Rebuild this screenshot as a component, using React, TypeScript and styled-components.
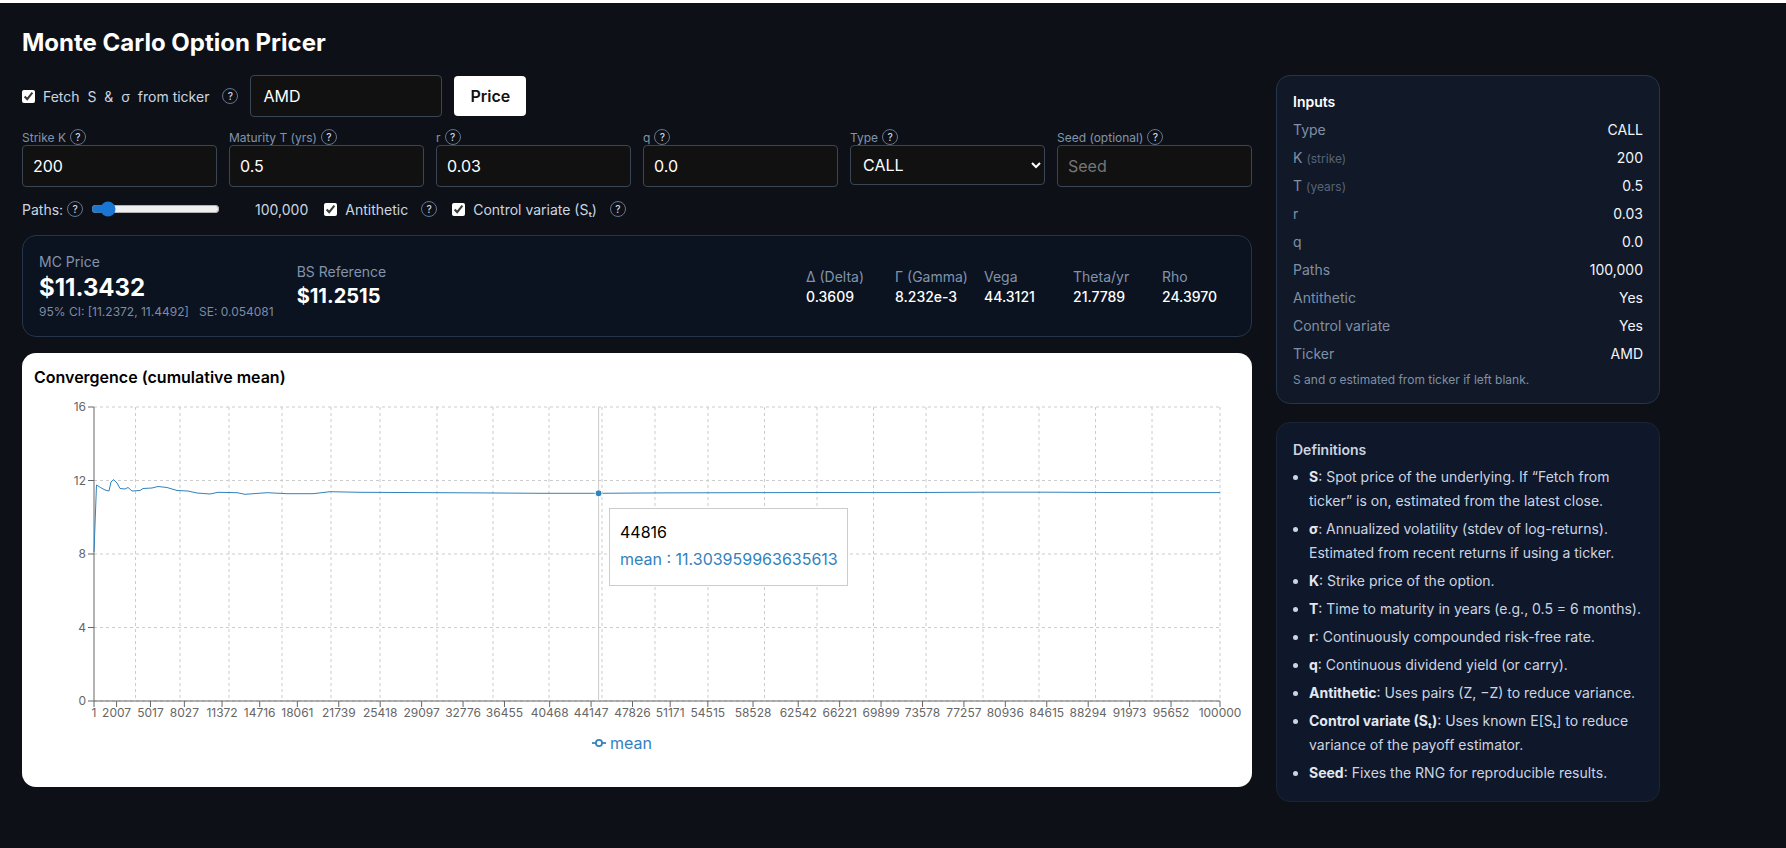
import React from 'react';
import styled, { createGlobalStyle } from 'styled-components';

const GlobalStyle = createGlobalStyle`
  html, body {
    margin: 0;
    padding: 0;
    background: #0d1117;
  }
  body {
    font-family: Inter, "Noto Sans", "DejaVu Sans", sans-serif;
    color: #fff;
  }
  * {
    box-sizing: border-box;
  }
`;

const Page = styled.div`
  min-height: 848px;
  border-top: 3px solid #fff;
  padding: 0 22px;
  background: #0d1117;
`;

const Title = styled.h1`
  margin: 0;
  height: 72px;
  padding-top: 24px;
  font-size: 24px;
  line-height: 32px;
  font-weight: 700;
  color: #fff;
`;

const Layout = styled.div`
  display: grid;
  grid-template-columns: 1230px 384px;
  column-gap: 24px;
  align-items: start;
`;

const Main = styled.main`
  display: flex;
  flex-direction: column;
`;

const Side = styled.aside`
  display: flex;
  flex-direction: column;
  gap: 18px;
`;

const Toolbar = styled.div`
  display: flex;
  align-items: center;
  gap: 12px;
  height: 42px;
`;

const CheckLabel = styled.label`
  display: inline-flex;
  align-items: center;
  gap: 8px;
  font-size: 14px;
  color: #cbd5e1;
  white-space: pre;
`;

const FetchLabel = styled(CheckLabel)`
  margin-right: 1px;
`;

const Check = styled.input.attrs({ type: 'checkbox' })`
  width: 13px;
  height: 13px;
  margin: 0;
  accent-color: #fff;
`;

const Help = styled.span`
  display: inline-flex;
  align-items: center;
  justify-content: center;
  width: 16px;
  height: 16px;
  flex: none;
  border: 1px solid #64748b;
  border-radius: 50%;
  font-size: 10px;
  font-weight: 500;
  color: #cbd5e1;
`;

const TextField = styled.input`
  height: 42px;
  width: 100%;
  padding: 0 10px;
  background: #111;
  border: 1px solid #3b4655;
  border-radius: 4px;
  font-family: inherit;
  font-size: 16px;
  color: #fff;
  outline: none;

  &::placeholder {
    color: #757575;
  }
`;

const TickerField = styled(TextField)`
  width: 192px;
  padding: 0 12px;
`;

const SelectField = styled.select`
  height: 40px;
  width: 100%;
  padding: 0 8px;
  background: #111;
  border: 1px solid #3b4655;
  border-radius: 4px;
  font-family: inherit;
  font-size: 16px;
  color: #fff;
`;

const PriceButton = styled.button`
  width: 72px;
  height: 40px;
  background: #fff;
  border: none;
  border-radius: 4px;
  font-family: inherit;
  font-size: 16px;
  font-weight: 600;
  color: #111;
`;

const Fields = styled.div`
  display: grid;
  grid-template-columns: repeat(6, 195px);
  gap: 12px;
  margin-top: 12px;
`;

const Field = styled.div`
  display: flex;
  flex-direction: column;
`;

const FieldLabel = styled.label`
  display: flex;
  align-items: center;
  gap: 4px;
  height: 16px;
  font-size: 12px;
  color: #8294ab;
`;

const PathsRow = styled.div`
  display: flex;
  align-items: center;
  height: 20px;
  margin-top: 12px;
  font-size: 14px;
  color: #cbd5e1;
`;

const PathsLabel = styled.span`
  display: inline-flex;
  align-items: center;
  gap: 4px;
`;

const Slider = styled.input.attrs({ type: 'range' })`
  width: 129px;
  margin: 0 0 0 8px;
  accent-color: #1976d2;
`;

const PathsValue = styled.span`
  margin-left: 35px;
  margin-right: 16px;
`;

const CheckGroup = styled.span`
  display: inline-flex;
  align-items: center;
  gap: 13px;
  margin-right: 15px;
`;

const Summary = styled.section`
  display: flex;
  align-items: center;
  height: 102px;
  margin-top: 16px;
  padding: 0 12px 0 16px;
  background: #0b1220;
  border: 1px solid #263549;
  border-radius: 14px;
`;

const PriceBlock = styled.div`
  margin-right: 23px;
`;

const SmallLabel = styled.div`
  font-size: 14px;
  line-height: 18px;
  color: #8294ab;
`;

const BigPrice = styled.div`
  font-size: 24px;
  line-height: 34px;
  font-weight: 700;
  color: #fff;
`;

const MidPrice = styled.div`
  margin-top: 1px;
  font-size: 20px;
  line-height: 28px;
  font-weight: 700;
  color: #fff;
`;

const Interval = styled.div`
  margin-top: -1px;
  font-size: 12px;
  line-height: 16px;
  color: #7c8ca3;
  white-space: pre;
`;

const Greeks = styled.div`
  display: grid;
  grid-template-columns: repeat(5, 77px);
  column-gap: 12px;
  margin: 3px 0 0 auto;
`;

const GreekValue = styled.div`
  margin-top: 1px;
  font-size: 14px;
  line-height: 20px;
  font-weight: 500;
  color: #fff;
`;

const ChartCard = styled.section`
  position: relative;
  height: 434px;
  margin-top: 16px;
  padding: 12px 12px 0;
  background: #fff;
  border-radius: 14px;
`;

const ChartTitle = styled.h3`
  margin: 0;
  height: 24px;
  font-size: 16px;
  line-height: 24px;
  font-weight: 600;
  color: #000;
`;

const ChartSvg = styled.svg`
  display: block;
  margin-top: 6px;
  overflow: visible;
`;

const AxisText = styled.text`
  font-family: Inter, sans-serif;
  font-size: 12px;
  fill: #666;
`;

const ChartTooltip = styled.div`
  position: absolute;
  left: 587px;
  top: 155px;
  width: 239px;
  height: 78px;
  padding: 10px;
  background: #fff;
  border: 1px solid #ccc;
  font-size: 16px;
  line-height: 27px;
  color: #000;
  white-space: nowrap;
`;

const TooltipValue = styled.div`
  color: #3182bd;
`;

const Legend = styled.div`
  display: flex;
  align-items: center;
  justify-content: center;
  gap: 4px;
  height: 16px;
  padding-right: 30px;
  font-size: 16px;
  line-height: 16px;
  color: #3182bd;
`;

const Card = styled.section`
  padding: 16px 16px 14px;
  background: #111827;
  border: 1px solid #263549;
  border-radius: 14px;
`;

const DefinitionsCard = styled(Card)`
  padding-bottom: 16px;
  background: #0f172a;
  border-color: #1b2536;
`;

const CardTitle = styled.div`
  margin-bottom: 4px;
  font-size: 14px;
  line-height: 20px;
  font-weight: 600;
  color: #fff;
`;

const DefinitionsTitle = styled(CardTitle)`
  line-height: 22px;
  color: #cbd5e1;
`;

const InputRow = styled.div`
  display: flex;
  justify-content: space-between;
  height: 28px;
  font-size: 14px;
  line-height: 28px;
  color: #7f90a6;
`;

const InputValue = styled.span`
  color: #f1f5f9;
`;

const KeyHint = styled.small`
  margin-left: 4px;
  font-size: 12px;
  color: #556479;
`;

const Note = styled.div`
  margin-top: 3px;
  font-size: 12px;
  line-height: 18px;
  color: #7f90a6;
`;

const DefinitionList = styled.ul`
  margin: 0;
  padding: 0 0 0 16px;
  font-size: 14px;
  line-height: 24px;
  color: #cbd5e1;
`;

const DefinitionItem = styled.li`
  margin-bottom: 4px;

  &:last-child {
    margin-bottom: 0;
  }

  b {
    font-weight: 700;
    color: #e2e8f0;
  }
`;

const inputRows: [string, string | null, string][] = [
  ['Type', null, 'CALL'],
  ['K', '(strike)', '200'],
  ['T', '(years)', '0.5'],
  ['r', null, '0.03'],
  ['q', null, '0.0'],
  ['Paths', null, '100,000'],
  ['Antithetic', null, 'Yes'],
  ['Control variate', null, 'Yes'],
  ['Ticker', null, 'AMD'],
];

const greeks = [
  ['Δ (Delta)', '0.3609'],
  ['Γ (Gamma)', '8.232e-3'],
  ['Vega', '44.3121'],
  ['Theta/yr', '21.7789'],
  ['Rho', '24.3970'],
];

const xTicks = [
  1, 2007, 5017, 8027, 11372, 14716, 18061, 21739, 25418, 29097, 32776, 36455, 40468, 44147, 47826,
  51171, 54515, 58528, 62542, 66221, 69899, 73578, 77257, 80936, 84615, 88294, 91973, 95652, 100000,
];
const xGrid = [
  135.5, 180, 229, 282, 331, 380, 437, 493, 549, 602, 655, 708, 764.5, 817, 873.5, 926, 983, 1039,
  1095.5, 1152, 1220,
];
const yTicks = [16, 12, 8, 4, 0];

const xPos = (v: number) => 94 + (1126 * (v - 1)) / 99999;
const yPos = (v: number) => 701 - v * 18.375;

const curve =
  'M94 552 L96.5 485 L100.5 487.5 L105 490 L109 491 L111 482 L113.5 479.5 L117 483 L120 488.5 L125 489 ' +
  'L128 487.5 L132 491 L140 490.5 L143 488.5 L152 488 L158 486.5 L167 487.5 L177 490.5 L188 491 L197 493 ' +
  'L210 494 L218 492.3 L237 492.7 L245 494.3 L267 492.7 L287 493.7 L313 493.7 L330 491.7 L360 492.3 ' +
  'L420 492.6 L480 492.9 L540 493.3 L598.6 493.3 L660 492.9 L740 492.7 L820 492.5 L900 492.6 L980 492.2 ' +
  'L1050 492.2 L1130 492.6 L1220 492.6';

function ConvergenceChart() {
  return (
    <ChartSvg width={1206} height={340} viewBox="34 395 1206 340">
      {yTicks.map((t) => (
        <line key={t} x1={94} x2={1220} y1={yPos(t)} y2={yPos(t)} stroke="#ccc" strokeDasharray="3 3" />
      ))}
      {xGrid.map((x) => (
        <line key={x} x1={x} x2={x} y1={407} y2={701} stroke="#ccc" strokeDasharray="3 3" />
      ))}
      <line x1={94} x2={94} y1={407} y2={701} stroke="#666" />
      <line x1={94} x2={1220} y1={701} y2={701} stroke="#666" />
      {yTicks.map((t) => (
        <g key={t}>
          <line x1={88} x2={94} y1={yPos(t)} y2={yPos(t)} stroke="#666" />
          <AxisText x={86} y={yPos(t) + 4} textAnchor="end">
            {t}
          </AxisText>
        </g>
      ))}
      {xTicks.map((t) => (
        <g key={t}>
          <line x1={xPos(t)} x2={xPos(t)} y1={701} y2={707} stroke="#666" />
          <AxisText x={xPos(t)} y={717} textAnchor="middle">
            {t}
          </AxisText>
        </g>
      ))}
      <line x1={598.6} x2={598.6} y1={407} y2={701} stroke="#ccc" />
      <path d={curve} fill="none" stroke="#3182bd" strokeWidth={1} />
      <circle cx={598.6} cy={493.3} r={3.5} fill="#3182bd" stroke="#fff" />
    </ChartSvg>
  );
}

function LegendIcon() {
  return (
    <svg width={14} height={14} viewBox="0 0 32 32">
      <path d="M0 16h32" stroke="#3182bd" strokeWidth={4} fill="none" />
      <circle cx={16} cy={16} r={7} fill="#fff" stroke="#3182bd" strokeWidth={4} />
    </svg>
  );
}

export default function App() {
  return (
    <Page>
      <GlobalStyle />
      <Title>Monte Carlo Option Pricer</Title>
      <Layout>
        <Main>
          <Toolbar>
            <FetchLabel>
              <Check defaultChecked />
              {'Fetch  S  &  σ  from ticker'}
            </FetchLabel>
            <Help>?</Help>
            <TickerField defaultValue="AMD" />
            <PriceButton>Price</PriceButton>
          </Toolbar>

          <Fields>
            <Field>
              <FieldLabel>Strike K <Help>?</Help></FieldLabel>
              <TextField defaultValue="200" />
            </Field>
            <Field>
              <FieldLabel>Maturity T (yrs) <Help>?</Help></FieldLabel>
              <TextField defaultValue="0.5" />
            </Field>
            <Field>
              <FieldLabel>r <Help>?</Help></FieldLabel>
              <TextField defaultValue="0.03" />
            </Field>
            <Field>
              <FieldLabel>q <Help>?</Help></FieldLabel>
              <TextField defaultValue="0.0" />
            </Field>
            <Field>
              <FieldLabel>Type <Help>?</Help></FieldLabel>
              <SelectField defaultValue="CALL">
                <option>CALL</option>
                <option>PUT</option>
              </SelectField>
            </Field>
            <Field>
              <FieldLabel>Seed (optional) <Help>?</Help></FieldLabel>
              <TextField placeholder="Seed" />
            </Field>
          </Fields>

          <PathsRow>
            <PathsLabel>Paths: <Help>?</Help></PathsLabel>
            <Slider min={20000} max={1000000} step={1000} defaultValue={100000} />
            <PathsValue>100,000</PathsValue>
            <CheckGroup>
              <CheckLabel>
                <Check defaultChecked />
                Antithetic
              </CheckLabel>
              <Help>?</Help>
            </CheckGroup>
            <CheckGroup>
              <CheckLabel>
                <Check defaultChecked />
                Control variate (Sₜ)
              </CheckLabel>
              <Help>?</Help>
            </CheckGroup>
          </PathsRow>

          <Summary>
            <PriceBlock>
              <SmallLabel>MC Price</SmallLabel>
              <BigPrice>$11.3432</BigPrice>
              <Interval>{'95% CI: [11.2372, 11.4492]   SE: 0.054081'}</Interval>
            </PriceBlock>
            <PriceBlock>
              <SmallLabel>BS Reference</SmallLabel>
              <MidPrice>$11.2515</MidPrice>
            </PriceBlock>
            <Greeks>
              {greeks.map(([label, value]) => (
                <div key={label}>
                  <SmallLabel>{label}</SmallLabel>
                  <GreekValue>{value}</GreekValue>
                </div>
              ))}
            </Greeks>
          </Summary>

          <ChartCard>
            <ChartTitle>Convergence (cumulative mean)</ChartTitle>
            <ConvergenceChart />
            <ChartTooltip>
              <div>44816</div>
              <TooltipValue>mean : 11.303959963635613</TooltipValue>
            </ChartTooltip>
            <Legend>
              <LegendIcon />
              mean
            </Legend>
          </ChartCard>
        </Main>

        <Side>
          <Card>
            <CardTitle>Inputs</CardTitle>
            {inputRows.map(([key, hint, value]) => (
              <InputRow key={key}>
                <span>
                  {key}
                  {hint && <KeyHint>{hint}</KeyHint>}
                </span>
                <InputValue>{value}</InputValue>
              </InputRow>
            ))}
            <Note>S and σ estimated from ticker if left blank.</Note>
          </Card>

          <DefinitionsCard>
            <DefinitionsTitle>Definitions</DefinitionsTitle>
            <DefinitionList>
              <DefinitionItem><b>S</b>: Spot price of the underlying. If “Fetch from ticker” is on, estimated from the latest close.</DefinitionItem>
              <DefinitionItem><b>σ</b>: Annualized volatility (stdev of log-returns). Estimated from recent returns if using a ticker.</DefinitionItem>
              <DefinitionItem><b>K</b>: Strike price of the option.</DefinitionItem>
              <DefinitionItem><b>T</b>: Time to maturity in years (e.g., 0.5 = 6 months).</DefinitionItem>
              <DefinitionItem><b>r</b>: Continuously compounded risk-free rate.</DefinitionItem>
              <DefinitionItem><b>q</b>: Continuous dividend yield (or carry).</DefinitionItem>
              <DefinitionItem><b>Antithetic</b>: Uses pairs (Z, −Z) to reduce variance.</DefinitionItem>
              <DefinitionItem><b>Control variate (Sₜ)</b>: Uses known E[Sₜ] to reduce variance of the payoff estimator.</DefinitionItem>
              <DefinitionItem><b>Seed</b>: Fixes the RNG for reproducible results.</DefinitionItem>
            </DefinitionList>
          </DefinitionsCard>
        </Side>
      </Layout>
    </Page>
  );
}
